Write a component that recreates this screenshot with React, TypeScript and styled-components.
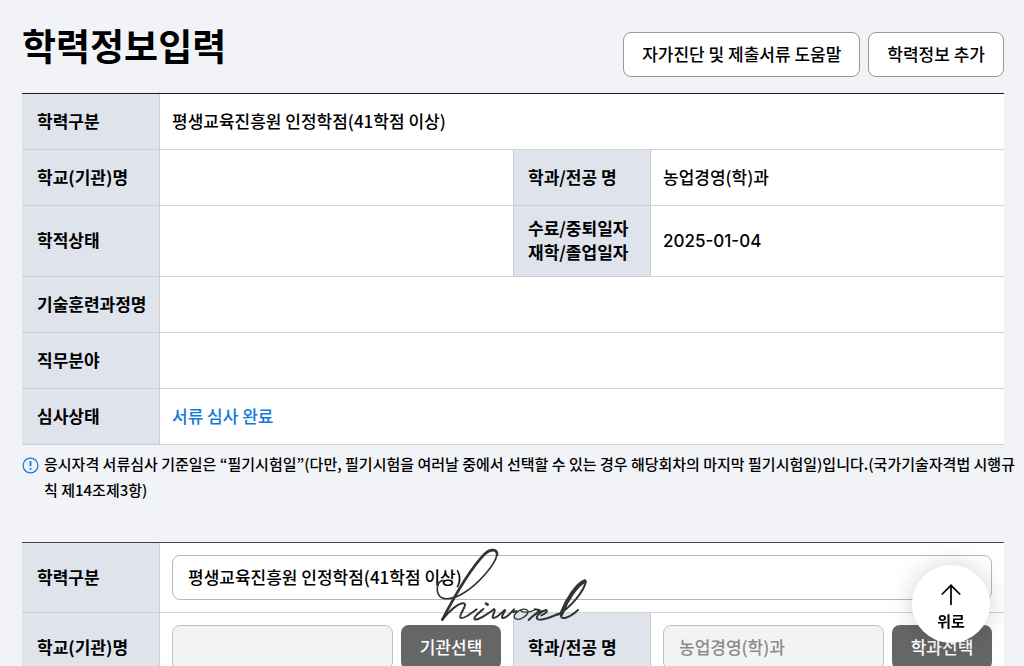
import React from "react";
import styled, { createGlobalStyle } from "styled-components";

const GlobalStyle = createGlobalStyle`
  *, *::before, *::after { box-sizing: border-box; }
  html { scrollbar-width: none; }
  body {
    margin: 0;
    background: #f1f3f7;
    color: #000;
    font-family: "Noto Sans CJK KR", Inter, sans-serif;
    font-size: 17px;
    font-weight: 500;
    line-height: 24px;
  }
  button, input, select { font: inherit; }
`;

const Page = styled.main`
  padding: 16px 20px 20px 22px;
`;

const Header = styled.header`
  display: flex;
  justify-content: space-between;
  align-items: flex-start;
  margin-bottom: 16px;
`;

const Title = styled.h1`
  margin: 0;
  font-size: 37px;
  font-weight: 700;
  line-height: 58px;
`;

const Actions = styled.div`
  display: flex;
  gap: 8px;
  padding-top: 16px;
`;

const OutlineButton = styled.button`
  height: 45px;
  padding: 0 18px 2px;
  border: 1px solid #999;
  border-radius: 8px;
  background: #fff;
  color: #000;
  cursor: pointer;
`;

const InfoTable = styled.table<{ $rule: string }>`
  width: 100%;
  table-layout: fixed;
  border-collapse: separate;
  border-spacing: 0;
  border-top: 1px solid ${(p) => p.$rule};
  background: #fff;
`;

const LabelCol = styled.col`
  width: 138px;
`;

const HeadCell = styled.th<{ $inner?: boolean }>`
  padding: 0 12px 2px ${(p) => (p.$inner ? 14 : 15)}px;
  border: solid #cdced1;
  border-width: 0 1px 1px ${(p) => (p.$inner ? 1 : 0)}px;
  background: #dfe3ec;
  font-weight: 700;
  text-align: left;
  white-space: nowrap;
`;

const Cell = styled.td<{ $tall?: boolean }>`
  height: ${(p) => (p.$tall ? 71 : 56)}px;
  padding: 0 12px 2px;
  border-bottom: 1px solid #d2d2d4;
`;

const FieldCell = styled.td`
  height: 70px;
  padding: 12px;
  border-bottom: 1px solid #d2d2d4;
`;

const DateText = styled.time`
  font-family: Inter, "Noto Sans CJK KR", sans-serif;
`;

const Status = styled.span`
  color: #0f7ad8;
`;

const Note = styled.p`
  display: flex;
  gap: 5px;
  margin: 6px 0 39px;
  font-size: 15px;
  line-height: 26px;
  white-space: nowrap;

  svg {
    flex: none;
    margin-top: 6px;
  }
`;

const Form = styled.form`
  position: relative;
`;

const FieldRow = styled.div`
  display: flex;
  gap: 8px;
`;

const Select = styled.select`
  display: block;
  width: 100%;
  height: 45px;
  padding: 0 15px 2px;
  appearance: none;
  border: 1px solid #b8b8ba;
  border-radius: 8px;
  background: #fff;
  color: #000;
`;

const TextInput = styled.input`
  flex: 1;
  min-width: 0;
  height: 45px;
  padding: 0 15px 2px;
  border: 1px solid #c0c0c0;
  border-radius: 8px;
  background: #f3f3f3;
  color: #8a8a8a;
`;

const DarkButton = styled.button`
  flex: none;
  width: 100px;
  height: 45px;
  padding: 0 0 2px;
  border: 0;
  border-radius: 8px;
  background: #666;
  color: #fff;
  cursor: pointer;
`;

const Signature = styled.svg`
  position: absolute;
  top: 0;
  left: 408px;
  pointer-events: none;
`;

const TopButton = styled.button`
  position: fixed;
  right: 34px;
  bottom: 23px;
  display: flex;
  flex-direction: column;
  align-items: center;
  width: 78px;
  height: 78px;
  padding: 19px 0 0;
  border: 0;
  border-radius: 50%;
  background: #fff;
  box-shadow: 0 0 24px rgba(0, 0, 0, 0.18);
  color: #000;
  font-size: 15px;
  font-weight: 700;
  line-height: 20px;
  gap: 5px;
  cursor: pointer;
`;

const Columns = () => (
  <colgroup>
    <LabelCol />
    <col />
    <LabelCol />
    <col />
  </colgroup>
);

export default function App() {
  return (
    <>
      <GlobalStyle />
      <Page>
        <Header>
          <Title>학력정보입력</Title>
          <Actions>
            <OutlineButton type="button">자가진단 및 제출서류 도움말</OutlineButton>
            <OutlineButton type="button">학력정보 추가</OutlineButton>
          </Actions>
        </Header>

        <InfoTable $rule="#1c1c1e">
          <Columns />
          <tbody>
            <tr>
              <HeadCell scope="row">학력구분</HeadCell>
              <Cell colSpan={3}>평생교육진흥원 인정학점(41학점 이상)</Cell>
            </tr>
            <tr>
              <HeadCell scope="row">학교(기관)명</HeadCell>
              <Cell />
              <HeadCell scope="row" $inner>학과/전공 명</HeadCell>
              <Cell>농업경영(학)과</Cell>
            </tr>
            <tr>
              <HeadCell scope="row">학적상태</HeadCell>
              <Cell $tall />
              <HeadCell scope="row" $inner>
                수료/중퇴일자
                <br />
                재학/졸업일자
              </HeadCell>
              <Cell $tall>
                <DateText dateTime="2025-01-04">2025-01-04</DateText>
              </Cell>
            </tr>
            <tr>
              <HeadCell scope="row">기술훈련과정명</HeadCell>
              <Cell colSpan={3} />
            </tr>
            <tr>
              <HeadCell scope="row">직무분야</HeadCell>
              <Cell colSpan={3} />
            </tr>
            <tr>
              <HeadCell scope="row">심사상태</HeadCell>
              <Cell colSpan={3}>
                <Status>서류 심사 완료</Status>
              </Cell>
            </tr>
          </tbody>
        </InfoTable>

        <Note>
          <svg width="17" height="17" viewBox="0 0 17 17" fill="none" stroke="#0f7ad8" aria-hidden="true">
            <circle cx="8.5" cy="8.5" r="7.4" strokeWidth="1.2" />
            <path d="M8.5 4v5.2M8.5 11v1.8" strokeWidth="1.8" />
          </svg>
          <span>
            응시자격 서류심사 기준일은 “필기시험일”(다만, 필기시험을 여러날 중에서 선택할 수 있는 경우 해당회차의 마지막 필기시험일)입니다.(국가기술자격법 시행규
            <br />칙 제14조제3항)
          </span>
        </Note>

        <Form onSubmit={(e: React.FormEvent) => e.preventDefault()}>
          <InfoTable $rule="#44454a">
            <Columns />
            <tbody>
              <tr>
                <HeadCell scope="row">
                  <label htmlFor="kind">학력구분</label>
                </HeadCell>
                <FieldCell colSpan={3}>
                  <Select id="kind">
                    <option>평생교육진흥원 인정학점(41학점 이상)</option>
                  </Select>
                </FieldCell>
              </tr>
              <tr>
                <HeadCell scope="row">
                  <label htmlFor="school">학교(기관)명</label>
                </HeadCell>
                <FieldCell>
                  <FieldRow>
                    <TextInput id="school" type="text" readOnly />
                    <DarkButton type="button">기관선택</DarkButton>
                  </FieldRow>
                </FieldCell>
                <HeadCell scope="row" $inner>
                  <label htmlFor="major">학과/전공 명</label>
                </HeadCell>
                <FieldCell>
                  <FieldRow>
                    <TextInput id="major" type="text" readOnly value="농업경영(학)과" />
                    <DarkButton type="button">학과선택</DarkButton>
                  </FieldRow>
                </FieldCell>
              </tr>
            </tbody>
          </InfoTable>

          <Signature
            width="164"
            height="88"
            viewBox="90 36 492 264"
            fill="none"
            stroke="#333"
            strokeLinecap="round"
            strokeLinejoin="round"
            aria-hidden="true"
          >
            <path d="M132 152C112 150 106 180 118 197C130 212 160 208 190 190C235 162 286 104 291 74" strokeWidth="5" />
            <path d="M291 74C293 58 272 54 254 72C215 112 168 190 127 269" strokeWidth="8" />
            <path d="M127 269C148 242 176 218 192 220C204 224 176 254 181 263C188 270 212 252 230 238" strokeWidth="6" />
            <path d="M250 237C240 246 218 262 224 268C234 272 256 256 282 238" strokeWidth="6" />
            <path d="M258 221L263 224" strokeWidth="8" />
            <path d="M282 238C290 240 272 262 280 264C292 264 306 246 314 240C320 240 300 260 308 264C320 266 334 246 342 238C340 246 334 248 350 244" strokeWidth="6" />
            <path d="M368 238C352 240 336 258 346 266C360 274 386 254 384 243C380 236 366 236 362 242C372 250 392 246 404 240" strokeWidth="4" />
            <path d="M404 238C414 240 420 238 418 242C408 252 392 262 386 270C398 258 412 248 424 244" strokeWidth="6" />
            <path d="M424 256C436 252 446 242 438 240C426 242 404 260 412 267C422 274 452 262 474 252" strokeWidth="6" />
            <path d="M474 254C512 232 552 184 557 156" strokeWidth="6" />
            <path d="M554 154C532 162 500 208 484 252" strokeWidth="12" />
            <path d="M484 250C476 272 504 268 534 240" strokeWidth="6" />
          </Signature>
        </Form>
      </Page>

      <TopButton type="button" onClick={() => window.scrollTo({ top: 0, behavior: "smooth" })}>
        <svg width="20" height="22" viewBox="0 0 20 22" fill="none" stroke="#000" strokeWidth="1.7" aria-hidden="true">
          <path d="M10 21V1.5M.8 10.5L10 1.3l9.2 9.2" />
        </svg>
        위로
      </TopButton>
    </>
  );
}
